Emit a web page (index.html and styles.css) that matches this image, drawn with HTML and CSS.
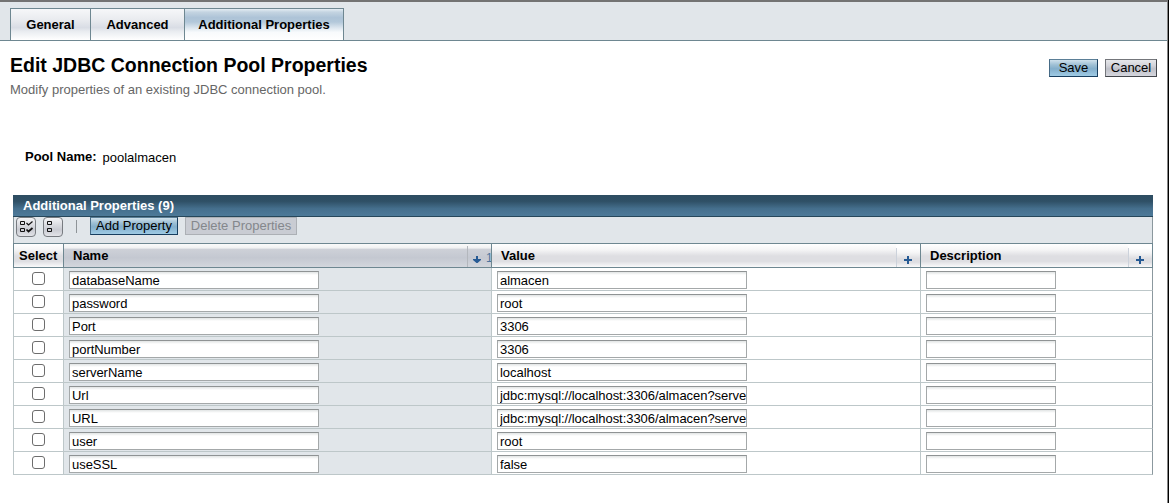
FILE: index.html
```html
<!DOCTYPE html>
<html lang="en">
<head>
<meta charset="utf-8">
<title>Edit JDBC Connection Pool Properties</title>
<link rel="stylesheet" href="styles.css">
</head>
<body>
<div class="frame">
  <nav class="tabs">
    <a class="tab tab-general">General</a>
    <a class="tab tab-advanced">Advanced</a>
    <a class="tab tab-props active">Additional Properties</a>
  </nav>
  <header class="head">
    <div>
      <h1><span>Edit JDBC Connection Pool Properties</span></h1>
      <p class="help"><span>Modify properties of an existing JDBC connection pool.</span></p>
    </div>
    <div class="actions">
      <button class="btn primary save">Save</button>
      <button class="btn cancel">Cancel</button>
    </div>
  </header>
  <div class="pool"><span class="pool-label">Pool Name:</span><span class="pool-value">poolalmacen</span></div>
  <section class="table">
    <h2 class="title"><span>Additional Properties (9)</span></h2>
    <div class="toolbar">
      <button class="icon-btn" aria-label="Select all">
        <svg width="20" height="20" viewBox="0 0 20 20" fill="none" stroke="#111"><path d="M4.500 4.500h4v3h-4zM4.500 11.500h4v3h-4z"/><path d="M10.500 6l2 2 4-3.500" stroke-width="1.200"/><path d="M10.500 12.500l2 2 4-3.500" stroke-width="1.700"/></svg>
      </button>
      <button class="icon-btn second" aria-label="Deselect all">
        <svg width="20" height="20" viewBox="0 0 20 20" fill="none" stroke="#111"><path d="M4.500 4.500h4v3h-4zM4.500 11.500h4v3h-4z"/></svg>
      </button>
      <i class="sep"></i>
      <button class="btn primary add">Add Property</button>
      <button class="btn disabled del">Delete Properties</button>
    </div>
    <div class="row header">
      <div class="th select"><span>Select</span></div>
      <div class="th sorted"><span class="name">Name</span><span class="sort sort-down"><svg width="9" height="8" viewBox="0 0 9 8"><path d="M3 0h2v3H8v1L4.500 7h-1L0 4V3h3z" fill="#265a94"/></svg><b>1</b></span></div>
      <div class="th"><span class="value">Value</span><span class="sort"><svg width="8" height="8" viewBox="0 0 8 8"><path d="M3 0h2v3h3v2H5v3H3V5H0V3h3z" fill="#265a94"/></svg></span></div>
      <div class="th"><span class="desc">Description</span><span class="sort sort-last"><svg width="8" height="8" viewBox="0 0 8 8"><path d="M3 0h2v3h3v2H5v3H3V5H0V3h3z" fill="#265a94"/></svg></span></div>
    </div>
    <div class="row"><div><input type="checkbox"></div><div class="key"><input class="field" value="databaseName"></div><div><input class="field" value="almacen"></div><div><input class="field short"></div></div>
    <div class="row"><div><input type="checkbox"></div><div class="key"><input class="field" value="password"></div><div><input class="field" value="root"></div><div><input class="field short"></div></div>
    <div class="row"><div><input type="checkbox"></div><div class="key"><input class="field" value="Port"></div><div><input class="field" value="3306"></div><div><input class="field short"></div></div>
    <div class="row"><div><input type="checkbox"></div><div class="key"><input class="field" value="portNumber"></div><div><input class="field" value="3306"></div><div><input class="field short"></div></div>
    <div class="row"><div><input type="checkbox"></div><div class="key"><input class="field" value="serverName"></div><div><input class="field" value="localhost"></div><div><input class="field short"></div></div>
    <div class="row"><div><input type="checkbox"></div><div class="key"><input class="field" value="Url"></div><div><input class="field" value="jdbc:mysql://localhost:3306/almacen?serve"></div><div><input class="field short"></div></div>
    <div class="row"><div><input type="checkbox"></div><div class="key"><input class="field" value="URL"></div><div><input class="field" value="jdbc:mysql://localhost:3306/almacen?serve"></div><div><input class="field short"></div></div>
    <div class="row"><div><input type="checkbox"></div><div class="key"><input class="field" value="user"></div><div><input class="field" value="root"></div><div><input class="field short"></div></div>
    <div class="row"><div><input type="checkbox"></div><div class="key"><input class="field" value="useSSL"></div><div><input class="field" value="false"></div><div><input class="field short"></div></div>
  </section>
</div>
</body>
</html>
```

FILE: styles.css
```css
* { box-sizing: border-box; }
html { background: #000; }
body {
  margin: 0;
  width: 1168px;
  height: 503px;
  overflow: hidden;
  background: #fff;
  font: 13px/16px "Liberation Sans", Arial, sans-serif;
  color: #000;
}
.frame { height: 503px; border-top: 2px solid #737373; border-right: 1px solid #858585; }

.tabs {
  display: flex;
  height: 39px;
  padding: 6px 0 0 10px;
  background: #e1e6ea;
  border-bottom: 1px solid #6e8791;
}
.tab {
  border: solid #6e8791;
  border-width: 1px 0 0 1px;
  font-weight: bold;
  line-height: 31px;
  text-align: center;
  white-space: nowrap;
  background: linear-gradient(#f6f7f9 0, #e9ebef 35%, #d9dde5 60%, #e9ecf0 72%, #fff 100%);
}
.tab-general { width: 80px; }
.tab-advanced { width: 94px; }
.tab-props { width: 160px; border-right-width: 1px; }
.tab.active { background: linear-gradient(#e4edf4 0, #c4d4e1 10%, #adc3d7 28%, #b3c8da 42%, #dfe8f0 62%, #f8fafc 75%, #fff 100%); }

.head { display: flex; justify-content: space-between; height: 103px; padding: 12px 10px 0; }
h1 { margin: 0; font-size: 19.5px; line-height: 25px; }
.help { margin: 4px 0 0; color: #666; }
.actions { display: flex; gap: 7px; align-items: flex-start; padding-top: 6px; }

.btn {
  height: 18px;
  padding: 0;
  border: 1px solid #43464c;
  border-top-color: #74767b;
  border-left-color: #74767b;
  border-radius: 0;
  background: linear-gradient(#e6e7ea 0, #d3d4da 35%, #bfc1c9 55%, #d5d6dd 100%);
  color: #000;
  font: 13px/14px "Liberation Sans", Arial, sans-serif;
  white-space: nowrap;
}
.btn.primary {
  border-color: #5b7f97 #183e5f #183e5f #466b86;
  background: linear-gradient(#cfe1ec 0, #9fc0d5 30%, #83aecb 55%, #9fcbe5 100%);
}
.btn.disabled { border-color: #acb0b5; background: #c9ccd3; color: #84878c; }
.save { width: 49px; }
.cancel { width: 52px; }
.add { width: 88px; }
.del { width: 112px; margin-left: 7px; }

.pool { display: flex; gap: 6px; height: 51px; padding: 5px 0 0 25px; }
.pool-label { font-weight: bold; }
.pool-value { padding-top: 1px; }

.table { width: 1140px; margin-left: 13px; }
.title {
  height: 22px;
  margin: 0;
  padding-left: 10px;
  border-bottom: 1px solid #26475b;
  background: linear-gradient(#2d4d61 0, #2f5066 30%, #456f8d 65%, #4d7a99 100%);
  color: #fff;
  font-size: 13px;
  line-height: 21px;
}
.toolbar {
  display: flex;
  height: 26px;
  padding-left: 2px;
  border: solid #8b989e;
  border-width: 0 1px;
  background: #e1e6ea;
}
.icon-btn {
  width: 20px;
  height: 20px;
  padding: 0;
  border: 1px solid #777b80;
  border-radius: 4px;
  background: linear-gradient(#f4f4f6, #c9cbd2 65%, #e2e3e8);
}
.icon-btn svg { display: block; margin: -1px; }
.icon-btn.second { margin-left: 7px; }
.sep { width: 1px; height: 13px; margin: 3px 13px 0; background: #8e9498; }

.row {
  display: grid;
  grid-template-columns: 50px 428px 429px 232px;
  height: 23px;
  border: solid #bdc7c9;
  border-width: 0 0 1px;
  border-right: 1px solid #8b989e;
}
.row > div { border-left: 1px solid #bdc7c9; padding: 3px 0 0 5px; }
.row > .key { background: #e1e6ea; }
.row.header { height: 25px; border: solid #6e8791; border-width: 1px 1px 1px 0; }
.row > .th {
  display: flex;
  justify-content: space-between;
  padding: 0;
  border-left-color: #6e8791;
  font-weight: bold;
  line-height: 24px;
  background: linear-gradient(#fff 0, #f5f5f6 25%, #dedee2 52%, #dedee2 75%, #fafafb 100%);
}
.th > span:first-child { height: 23px; padding-left: 9px; }
.th.select > span:first-child { padding-left: 5px; }
.row > .sorted { background: linear-gradient(#fafafa 0, #f0f1f2 18%, #ced1d8 22%, #c4c8d1 60%, #d3d6dd 100%); }
.th > .sort {
  width: 24px;
  height: 19px;
  margin-top: 4px;
  padding: 8px 0 0 7px;
  border-left: 1px solid #ccd2db;
  background: linear-gradient(#fff 0, #f5f5f6 25%, #dedee2 55%, #dedee2 75%, #fafafb 100%);
  overflow: hidden;
  line-height: 8px;
  box-shadow: 0 -4px #fff;
}
.sort svg { display: block; flex: none; }
.th > .sort-down {
  display: flex;
  gap: 4px;
  height: 21px;
  margin-top: 2px;
  padding: 10px 0 0 5px;
  border-color: #b3b7bd;
  background: none;
  box-shadow: none;
}
.sort-down b { color: #4b749e; font-size: 12px; font-weight: normal; margin-top: -2px; }

input { display: block; margin: 0; }
input[type="checkbox"] {
  appearance: none;
  width: 13px;
  height: 13px;
  margin: 1px 0 0 13px;
  border: 1px solid #6d6d6d;
  border-radius: 3px;
  background: #fff;
}
.field {
  width: 250px;
  height: 18px;
  padding: 1px 0 0 2px;
  border: 1px solid #a4a8a9;
  border-top-color: #8f9394;
  background: linear-gradient(#e1e4e4 0, #fff 3px);
  color: #000;
  font: 13px/15px "Liberation Sans", Arial, sans-serif;
  letter-spacing: -0.04px;
}
.field.short { width: 130px; }
```
